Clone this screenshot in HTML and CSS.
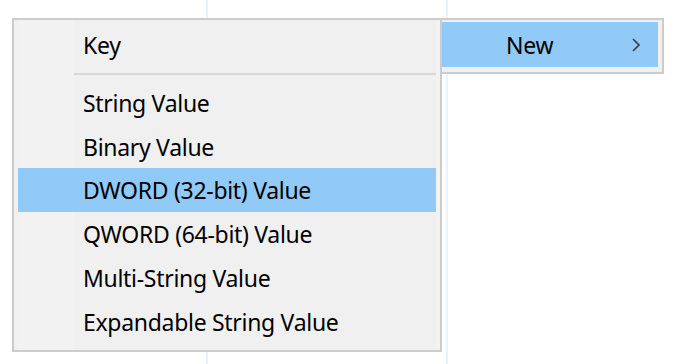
FILE: index.html
```html
<!DOCTYPE html>
<html>

<head>
    <link rel="stylesheet" href="styles.css">
</head>

<body>
    <div class="desk">
        <div class="menu">
            <div class="item">Key</div>
            <div class="sep"></div>
            <div class="item">String Value</div>
            <div class="item">Binary Value</div>
            <div class="item active">DWORD (32-bit) Value</div>
            <div class="item">QWORD (64-bit) Value</div>
            <div class="item">Multi-String Value</div>
            <div class="item">Expandable String Value</div>
        </div>
        <div class="menu sub">
            <div class="item active">
                <span>New</span>
                <svg class="arrow" width="10" height="16" viewBox="0 0 10 16">
                    <polyline points="2,2 8,8 2,14" fill="none" stroke="#3a3a3a" stroke-width="1.6"/>
                </svg>
            </div>
        </div>
    </div>
</body>

</html>
```

FILE: styles.css
```css
* {
    margin: 0;
    padding: 0;
    box-sizing: border-box;
}

body {
    width: 676px;
    height: 364px;
    overflow: hidden;
    background-color: #fff;
    /* faint list view column lines behind the menus */
    background-image:
        linear-gradient(90deg, transparent 206px, #e9f1fb 206px, #e9f1fb 208px, transparent 208px),
        linear-gradient(90deg, transparent 446px, #e9f1fb 446px, #e9f1fb 448px, transparent 448px);
    font-family: "Noto Sans", "Open Sans", sans-serif;
    font-size: 23px;
    letter-spacing: -0.3px;
    color: #000;
}

.desk {
    display: flex;
    align-items: flex-start;
    padding: 18px 0 0 12px;
}

.menu {
    width: 430px;
    height: 334px;
    border: 2px solid #cccccc;
    padding: 3px 4px 5px 4px;
    background-color: #f0f0f0;
    background-image: linear-gradient(90deg, #f2f2f2 56px, #f0f0f0 56px);
    background-origin: content-box;
}

.item {
    height: 44px;
    padding-left: 65px;
    display: flex;
    align-items: center;
    white-space: nowrap;
}

.item.active {
    background-color: #91c9f7;
}

.sep {
    height: 14px;
    margin-left: 56px;
    display: flex;
    align-items: center;
}

.sep::before {
    content: "";
    flex: 1;
    height: 2px;
    background-color: #d7d7d7;
}

.menu .item:nth-child(5) {
    margin-top: -1px;
}

.sub {
    width: 224px;
    height: 56px;
    margin-left: -2px;
    padding: 2px 4px 5px 0;
    background-image: none;
}

.sub .item {
    height: 45px;
    padding-left: 64px;
    padding-right: 17px;
    justify-content: space-between;
}

.arrow {
    display: block;
}
```
